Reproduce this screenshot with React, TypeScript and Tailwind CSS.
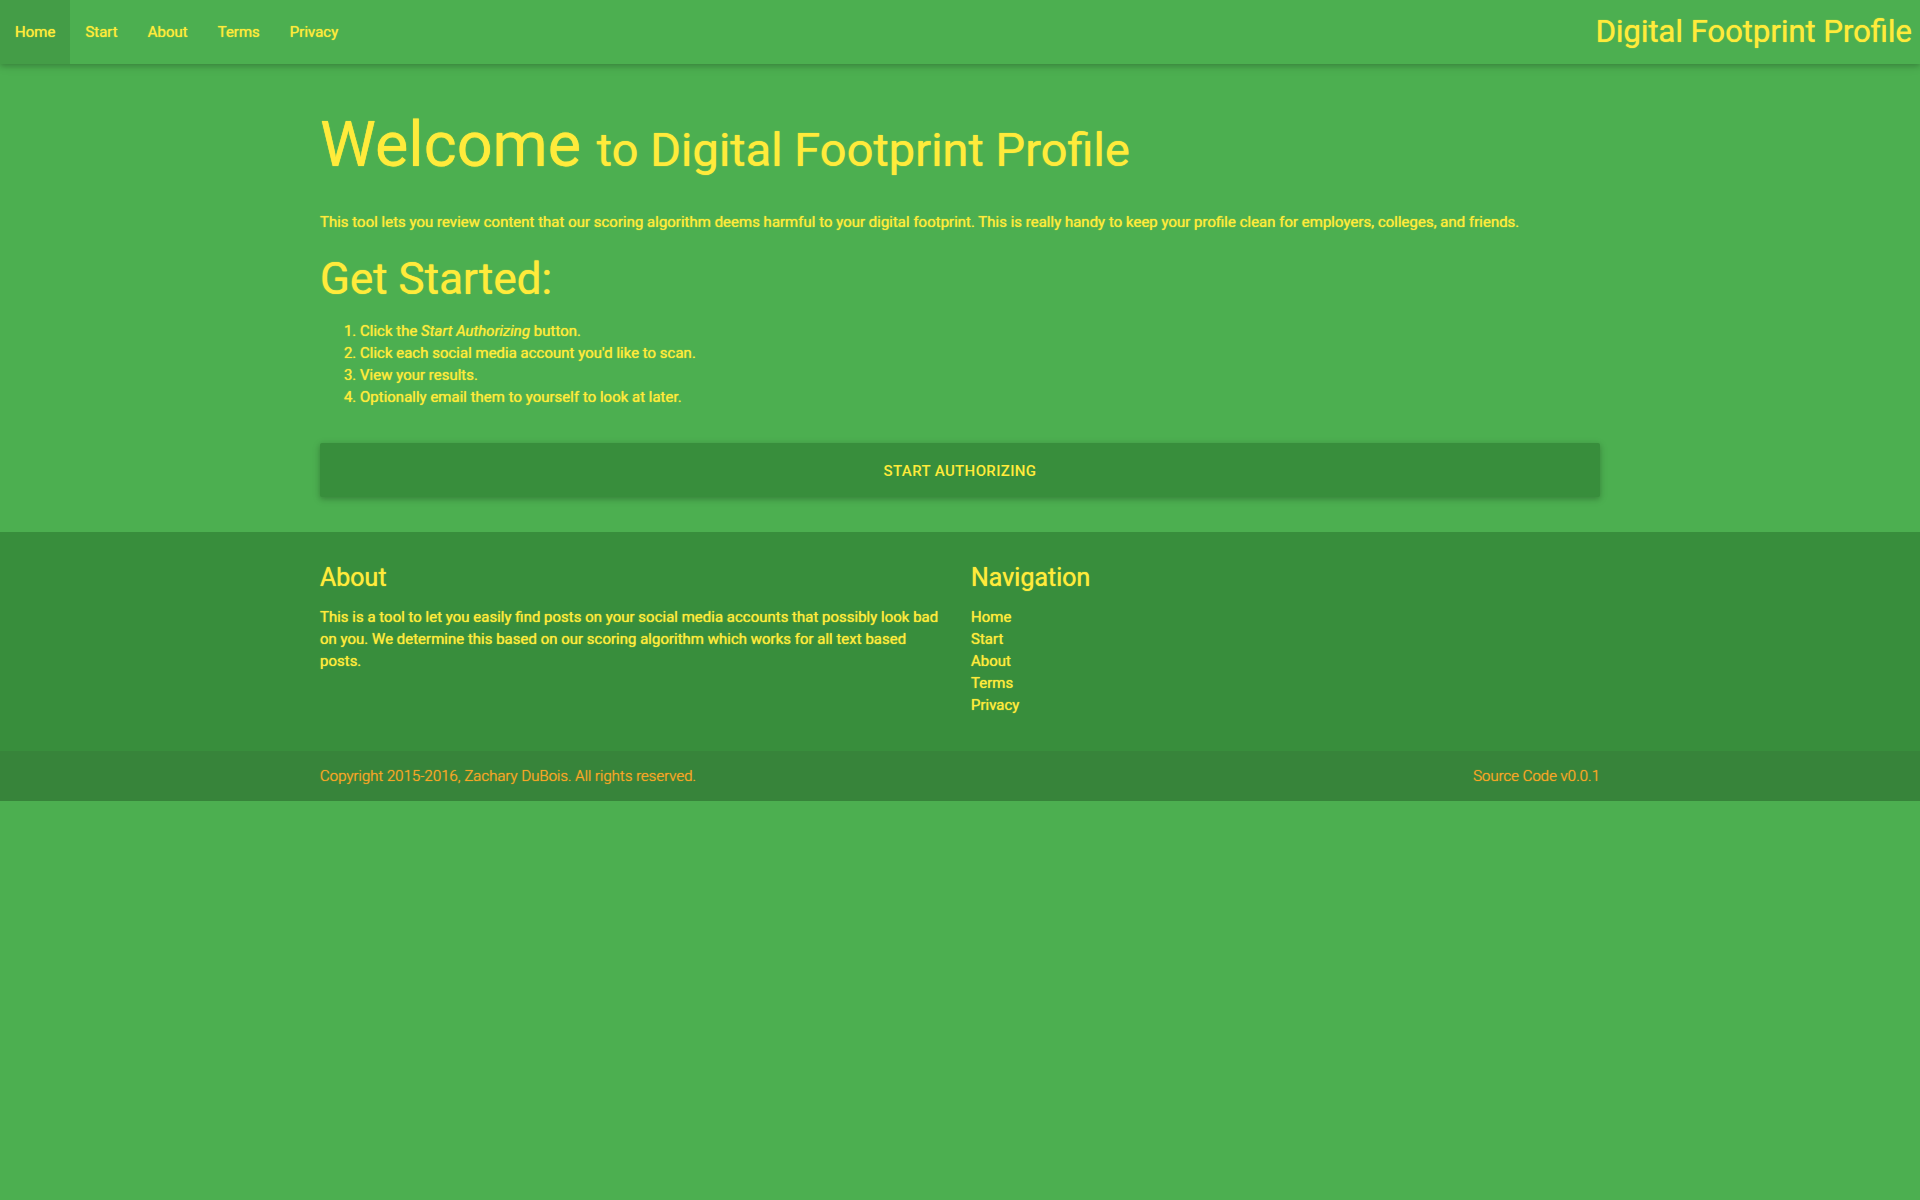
const links = ['Home', 'Start', 'About', 'Terms', 'Privacy'];

export default function App() {
  return (
    <div className="min-h-screen bg-[#4caf50] font-[Roboto,sans-serif] text-[15px] leading-[22px] font-normal text-[#ffeb3b] [text-shadow:0_0_1px_currentColor]">
      <nav className="flex h-16 items-start justify-between bg-[#4caf50] shadow-[0_2px_5px_0_rgba(0,0,0,0.16),0_2px_10px_0_rgba(0,0,0,0.12)]">
        <ul className="flex leading-[64px]">
          {links.map((l) => (
            <li key={l} className={l === 'Home' ? 'bg-black/10' : ''}>
              <a href="#" className="block px-[15px]">{l}</a>
            </li>
          ))}
        </ul>
        <a href="#" className="px-2 text-[31px] leading-[64px]">Digital Footprint Profile</a>
      </nav>
      <main className="mx-auto w-2/3 pb-[35px]">
        <h1 className="pt-[46px] text-[63px] leading-[70px]">
          Welcome <span className="text-[47px]">to Digital Footprint Profile</span>
        </h1>
        <p className="mt-[26px]">This tool lets you review content that our scoring algorithm deems harmful to your digital footprint. This is really handy to keep your profile clean for employers, colleges, and friends.</p>
        <h2 className="mt-[21px] text-[44px] leading-[50px]">Get Started:</h2>
        <ol className="mt-4 list-decimal pl-10">
          <li>Click the <em>Start Authorizing</em> button.</li>
          <li>Click each social media account you'd like to scan.</li>
          <li>View your results.</li>
          <li>Optionally email them to yourself to look at later.</li>
        </ol>
        <button type="button" className="mt-[35px] block h-[54px] w-full rounded-xs bg-[#388e3c] pt-px font-medium uppercase tracking-wide shadow-[0_2px_5px_0_rgba(0,0,0,0.16),0_2px_10px_0_rgba(0,0,0,0.12)] [text-shadow:none]">Start Authorizing</button>
      </main>
      <footer className="bg-[#388e3c]">
        <div className="mx-auto grid w-2/3 grid-cols-2 gap-[22px] pt-[31px] pb-[35px]">
          <section>
            <h3 className="text-[25px] leading-[30px]">About</h3>
            <p className="mt-[13px]">This is a tool to let you easily find posts on your social media accounts that possibly look bad on you. We determine this based on our scoring algorithm which works for all text based posts.</p>
          </section>
          <section>
            <h3 className="text-[25px] leading-[30px]">Navigation</h3>
            <ul className="mt-[13px]">
              {links.map((l) => (
                <li key={l}><a href="#">{l}</a></li>
              ))}
            </ul>
          </section>
        </div>
        <div className="bg-[#333]/10 font-light text-[#ffa726]">
          <div className="mx-auto flex h-[50px] w-2/3 items-center justify-between">
            <span>Copyright 2015-2016, Zachary DuBois. All rights reserved.</span>
            <a href="#">Source Code v0.0.1</a>
          </div>
        </div>
      </footer>
    </div>
  );
}
